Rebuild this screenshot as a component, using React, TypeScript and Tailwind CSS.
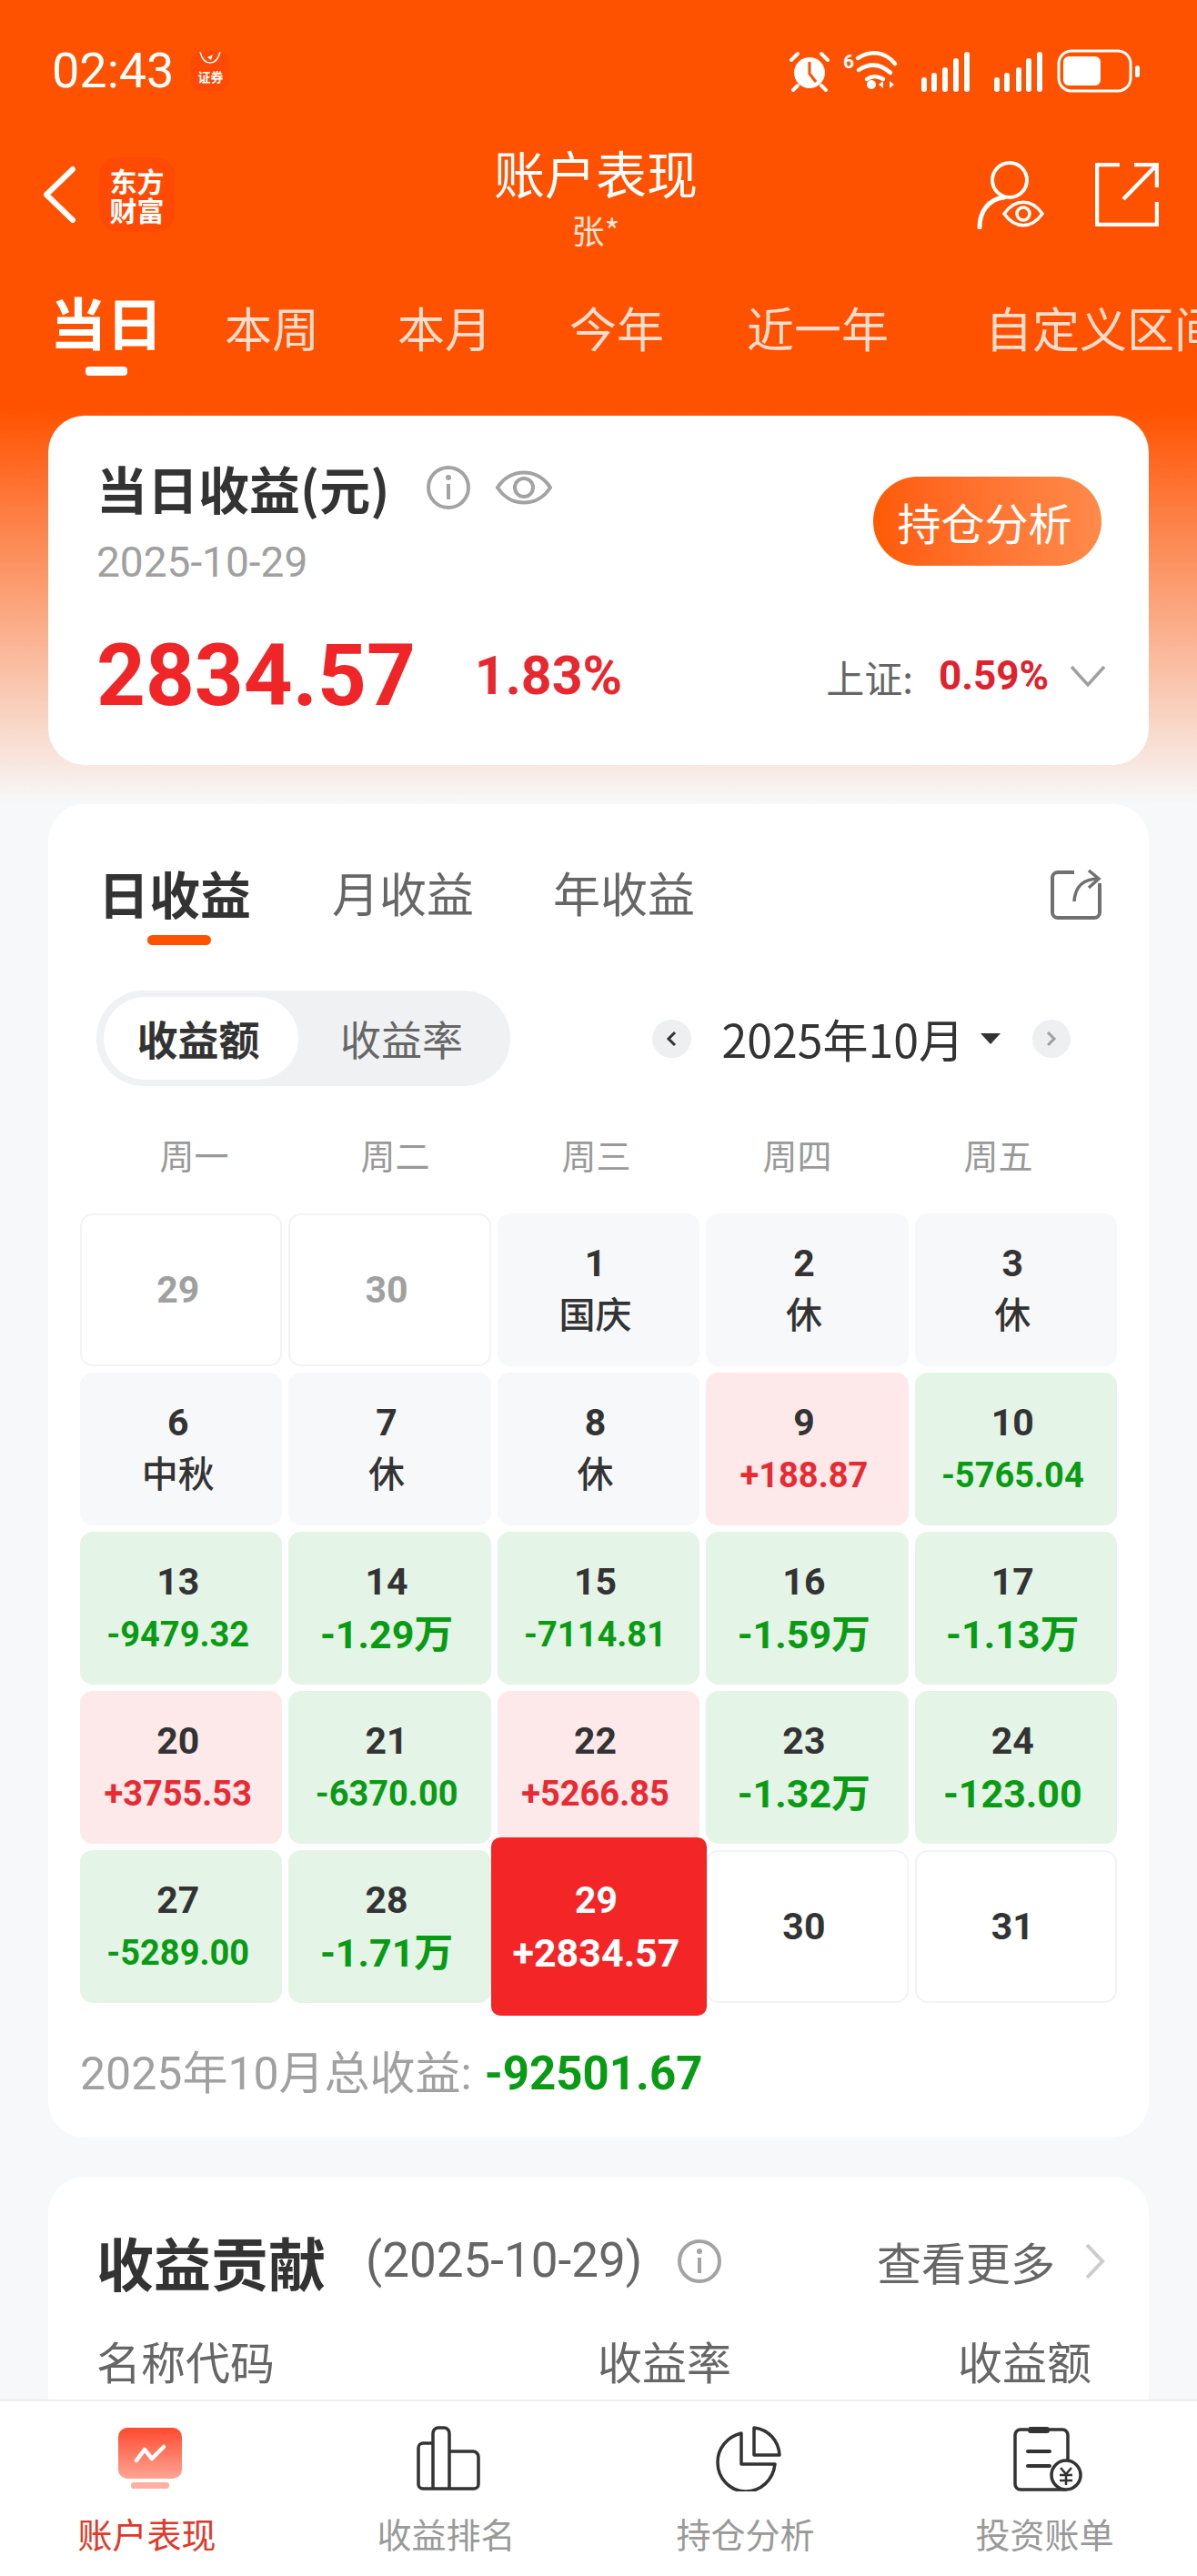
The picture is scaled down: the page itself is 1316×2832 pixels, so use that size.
type Day = { day: string; sub?: string; kind: 'out' | 'rest' | 'up' | 'down' | 'empty' | 'today'; big?: boolean };

// rows of the calendar, weekdays only
const days: Day[] = [
  { day: '29', kind: 'out' },
  { day: '30', kind: 'out' },
  { day: '1', sub: '国庆', kind: 'rest' },
  { day: '2', sub: '休', kind: 'rest' },
  { day: '3', sub: '休', kind: 'rest' },
  { day: '6', sub: '中秋', kind: 'rest' },
  { day: '7', sub: '休', kind: 'rest' },
  { day: '8', sub: '休', kind: 'rest' },
  { day: '9', sub: '+188.87', kind: 'up' },
  { day: '10', sub: '-5765.04', kind: 'down' },
  { day: '13', sub: '-9479.32', kind: 'down' },
  { day: '14', sub: '-1.29万', kind: 'down', big: true },
  { day: '15', sub: '-7114.81', kind: 'down' },
  { day: '16', sub: '-1.59万', kind: 'down', big: true },
  { day: '17', sub: '-1.13万', kind: 'down', big: true },
  { day: '20', sub: '+3755.53', kind: 'up' },
  { day: '21', sub: '-6370.00', kind: 'down' },
  { day: '22', sub: '+5266.85', kind: 'up' },
  { day: '23', sub: '-1.32万', kind: 'down', big: true },
  { day: '24', sub: '-123.00', kind: 'down', big: true },
  { day: '27', sub: '-5289.00', kind: 'down' },
  { day: '28', sub: '-1.71万', kind: 'down', big: true },
  { day: '29', sub: '+2834.57', kind: 'today' },
  { day: '30', kind: 'empty' },
  { day: '31', kind: 'empty' },
];

const DIGITS = "font-['Roboto','Noto_Sans_CJK_SC',sans-serif]";

function DayCell({ d }: { d: Day }) {
  if (d.kind === 'today') {
    return (
      <div className="relative h-[168px]">
        <div className={`absolute -top-[14px] -left-[7px] -right-[8px] h-[196px] pr-[6px] rounded-[10px] bg-[#f32526] flex flex-col items-center justify-center text-white font-bold z-10 ${DIGITS}`}>
          <div className="text-[41px] leading-[58px]">{d.day}</div>
          <div className="text-[43px] leading-[58px]">{d.sub}</div>
        </div>
      </div>
    );
  }
  let box = 'bg-[#f7f8fa]';
  let subColor = 'text-[#333333]';
  if (d.kind === 'out' || d.kind === 'empty') box = 'bg-white border-2 border-[#f3f3f5]';
  if (d.kind === 'up') {
    box = 'bg-[#fde9e9]';
    subColor = 'text-[#e82a33]';
  }
  if (d.kind === 'down') {
    box = 'bg-[#e4f4e6]';
    subColor = 'text-[#0a9b14]';
  }
  const isText = d.kind === 'rest';
  return (
    <div className={`h-[168px] pr-[7px] rounded-[14px] flex flex-col items-center justify-center font-bold ${DIGITS} ${box}`}>
      <div className={`text-[41px] leading-[58px] ${d.kind === 'out' ? 'text-[#a0a0a0]' : 'text-[#333333]'}`}>{d.day}</div>
      {d.sub && <div className={`${d.big ? 'text-[43px]' : isText ? 'text-[40px] font-medium' : 'text-[38px]'} leading-[58px] ${subColor}`}>{d.sub}</div>}
    </div>
  );
}

function InfoIcon({ color = '#a3a3a3' }: { color?: string }) {
  return (
    <svg width="50" height="50" viewBox="0 0 50 50" fill="none">
      <circle cx="25" cy="25" r="22" stroke={color} strokeWidth="4" />
      <circle cx="25" cy="14" r="3" fill={color} />
      <rect x="23" y="21" width="4" height="17" fill={color} />
    </svg>
  );
}

function StatusBar() {
  return (
    <div className="h-[157px] pl-[57px] pr-[56px] pt-[50px] flex justify-between items-start text-white">
      <div className="flex items-start">
        <span className="text-[54px] leading-[56px] font-['Roboto',sans-serif]">02:43</span>
        <div className="ml-[19px] mt-[7px] w-[42px] h-[43px] rounded-[10px] bg-[#ff4a04] flex flex-col items-center justify-between pb-[8px] text-[14px] leading-[16px] font-bold">
          <svg width="26" height="14" viewBox="0 0 26 14" fill="none">
            <path d="M2 0c2 8 6 12 11 12s9-4 11-12" stroke="white" strokeWidth="1.5" />
            <path d="M10 6l6-3-2 6z" fill="white" />
          </svg>
          证券
        </div>
      </div>
      <svg width="400" height="56" viewBox="0 0 400 56" fill="none">
        {/* alarm */}
        <circle cx="30" cy="30" r="17" fill="white" />
        <path d="M30 18v13l7 9" stroke="#ff5200" strokeWidth="3" />
        <path d="M10 16l7-7M50 16l-7-7M12 49l5-5M48 49l-5-5" stroke="white" strokeWidth="4" strokeLinecap="round" />
        {/* wifi */}
        <text x="67" y="25" fill="white" fontSize="21" fontWeight="700" fontFamily="Roboto, sans-serif">6</text>
        <path d="M83 14c14-9 29-8 41 6M84 27c12-8 24-7 35 3M93 37c6-4 11-4 18 0" stroke="white" strokeWidth="4.5" strokeLinecap="round" />
        <circle cx="98" cy="43" r="5" fill="white" />
        <path d="M106 43l5-4v8zM118 39l5 4-5 4z" fill="white" />
        {/* signal */}
        <path d="M156 38v10M167 33v15M179 27v21M191 17v31M203 10v38M236 38v10M247 33v15M260 27v21M271 17v31M283 10v38" stroke="white" strokeWidth="6" strokeLinecap="round" />
        {/* battery */}
        <rect x="304" y="6" width="79" height="44" rx="14" stroke="white" strokeWidth="3" />
        <rect x="309" y="12" width="41" height="32" rx="6" fill="white" />
        <rect x="388" y="22" width="5" height="13" rx="2.5" fill="white" />
      </svg>
    </div>
  );
}

function NavBar() {
  return (
    <div className="h-[114px] pl-[46px] pr-[42px] flex items-center justify-between text-white">
      <div className="flex items-center gap-[25px] w-[290px]">
        <svg width="38" height="64" viewBox="0 0 38 64" fill="none">
          <path d="M34 4L5 32l29 28" stroke="white" strokeWidth="6" strokeLinecap="round" strokeLinejoin="round" />
        </svg>
        <div className="w-[83px] h-[82px] rounded-[20px] bg-[#ff4a04] flex flex-col items-center justify-center text-[30px] leading-[32px] font-bold">
          <div>东方</div>
          <div>财富</div>
        </div>
      </div>
      <div className="flex flex-col items-center">
        <div className="text-[56px] leading-[70px]">账户表现</div>
        <div className="text-[36px] leading-[44px] mt-[6px] text-[#ffe6d8]">张*</div>
      </div>
      <div className="flex items-center gap-[56px] w-[300px] justify-end">
        <svg width="74" height="76" viewBox="0 0 74 76" fill="none">
          <circle cx="36" cy="22" r="19" stroke="white" strokeWidth="4" />
          <path d="M3 74c0-18 10-31 27-33" stroke="white" strokeWidth="5" strokeLinecap="round" />
          <path d="M30 59c12-17 30-17 42 0c-12 17-30 17-42 0z" stroke="white" strokeWidth="3.5" />
          <circle cx="51" cy="59" r="7" stroke="white" strokeWidth="3.5" />
        </svg>
        <svg width="70" height="70" viewBox="0 0 70 70" fill="none">
          <path d="M27 2H2v66h66V43" stroke="white" strokeWidth="4.5" strokeLinejoin="round" />
          <path d="M43 2h25v25M68 2L31 40" stroke="white" strokeWidth="4.5" />
        </svg>
      </div>
    </div>
  );
}

function PeriodTabs() {
  return (
    <div className="h-[186px] pl-[55px] flex items-start whitespace-nowrap overflow-hidden text-[52px] leading-[66px] text-[#ffdccb]">
      <div className="flex flex-col items-center mt-[44px]">
        <div className="font-bold text-white text-[62px] leading-[76px]">当日</div>
        <div className="w-[46px] h-[10px] rounded-[4px] bg-white mt-[12px]" />
      </div>
      <div className="ml-[68px] mt-[56px]">本周</div>
      <div className="ml-[86px] mt-[56px]">本月</div>
      <div className="ml-[85px] mt-[56px]">今年</div>
      <div className="ml-[91px] mt-[56px]">近一年</div>
      <div className="ml-[106px] mt-[56px]">自定义区间</div>
    </div>
  );
}

function SummaryCard() {
  return (
    <div className="h-[384px] mx-[53px] rounded-[40px] bg-white pl-[53px] pr-[47px] pt-[44px]">
      <div className="flex items-start justify-between">
        <div>
          <div className="flex items-center">
            <div className="text-[56px] leading-[70px] font-bold">当日收益(元)</div>
            <div className="ml-[40px]"><InfoIcon /></div>
            <svg width="62" height="48" viewBox="0 0 62 48" fill="none" className="ml-[27px]">
              <path d="M2 24C16 2 46 2 60 24C46 46 16 46 2 24z" stroke="#a3a3a3" strokeWidth="4" />
              <circle cx="31" cy="24" r="10" stroke="#a3a3a3" strokeWidth="4" />
            </svg>
          </div>
          <div className="text-[46px] leading-[54px] text-[#a0a0a0] mt-[20px] font-['Roboto',sans-serif]">2025-10-29</div>
        </div>
        <div className="w-[251px] h-[98px] mt-[23px] mr-[5px] rounded-[49px] bg-gradient-to-r from-[#ff5a00] to-[#ff8a4a] text-white text-[48px] flex items-center justify-center pr-[6px]">持仓分析</div>
      </div>
      <div className="flex items-center mt-[43px] font-bold font-['Roboto',sans-serif]">
        <div className="text-[94px] leading-[110px] text-[#f02527]">2834.57</div>
        <div className="text-[59px] text-[#e8282e] ml-[65px]">1.83%</div>
        <div className="ml-auto text-[42px] font-normal text-[#666666] font-['Noto_Sans_CJK_SC',sans-serif]">上证:</div>
        <div className="text-[44px] text-[#e0212e] ml-[28px]">0.59%</div>
        <svg width="40" height="26" viewBox="0 0 40 26" fill="none" className="ml-[23px]">
          <path d="M2 3l18 20L38 3" stroke="#a0a0a0" strokeWidth="3.5" />
        </svg>
      </div>
    </div>
  );
}

function CalendarCard() {
  return (
    <div className="h-[1466px] mx-[53px] mt-[43px] rounded-[40px] bg-white pt-[62px] px-[35px]">
      <div className="flex items-start h-[143px] pl-[20px] pr-[17px]">
        <div className="flex flex-col items-center">
          <div className="text-[56px] leading-[70px] font-bold">日收益</div>
          <div className="w-[70px] h-[11px] rounded-[6px] bg-[#ff5200] mt-[12px] ml-[10px]" />
        </div>
        <div className="text-[52px] leading-[70px] text-[#666666] ml-[89px]">月收益</div>
        <div className="text-[52px] leading-[70px] text-[#666666] ml-[87px]">年收益</div>
        <svg width="56" height="56" viewBox="0 0 56 56" fill="none" className="ml-auto mt-[9px]">
          <path d="M26 4H8a6 6 0 00-6 6v38a6 6 0 006 6h40a6 6 0 006-6V16" stroke="#707070" strokeWidth="4" />
          <path d="M42 2l11 9-11 10M53 11c-16 0-26 8-27 25" stroke="#707070" strokeWidth="3.5" />
        </svg>
      </div>

      <div className="flex items-center justify-between pl-[18px] pr-[51px]">
        <div className="w-[455px] h-[105px] rounded-[52px] bg-[#f0f1f3] pl-[8px] flex items-center text-[45px]">
          <div className="w-[214px] h-[91px] pr-[6px] rounded-[46px] bg-white flex items-center justify-center font-bold">收益额</div>
          <div className="flex-1 pr-[6px] text-center text-[#666666]">收益率</div>
        </div>
        <div className="flex items-center">
          <div className="w-[43px] h-[42px] rounded-full bg-[#eeeff1] flex items-center justify-center">
            <svg width="14" height="20" viewBox="0 0 14 20" fill="none"><path d="M11 3L4 10l7 7" stroke="#333333" strokeWidth="3" /></svg>
          </div>
          <div className="text-[50px] ml-[34px]">2025年10月</div>
          <svg width="22" height="12" viewBox="0 0 22 12" className="ml-[18px]"><path d="M0 0h22L11 12z" fill="#333333" /></svg>
          <div className="w-[42px] h-[42px] rounded-full bg-[#eeeff1] flex items-center justify-center ml-[35px]">
            <svg width="14" height="20" viewBox="0 0 14 20" fill="none"><path d="M3 3l7 7-7 7" stroke="#a0a0a0" strokeWidth="3" /></svg>
          </div>
        </div>
      </div>

      <div className="grid grid-cols-[repeat(5,221px)] pl-[15px] mt-[50px] text-[38px] leading-[50px] text-[#999999] text-center">
        <div>周一</div>
        <div>周二</div>
        <div>周三</div>
        <div>周四</div>
        <div>周五</div>
      </div>

      <div className="grid grid-cols-5 gap-x-[7px] gap-y-[7px] mt-[40px]">
        {days.map((d, i) => (
          <DayCell key={i} d={d} />
        ))}
      </div>

      <div className={`flex items-center text-[50px] leading-[60px] text-[#a0a0a0] mt-[48px] ${DIGITS}`}>
        2025年10月总收益:
        <span className="text-[51px] font-bold text-[#0a9b14] ml-[14px]">-92501.67</span>
      </div>
    </div>
  );
}

function ContributionCard() {
  return (
    <div className="h-[440px] mx-[53px] mt-[43px] rounded-[40px] bg-white pl-[53px] pr-[47px] pt-[53px]">
      <div className="flex items-center">
        <div className="text-[63px] leading-[80px] font-bold">收益贡献</div>
        <div className="text-[53px] text-[#666666] ml-[44px] font-['Roboto',sans-serif]">(2025-10-29)</div>
        <div className="ml-[38px]"><InfoIcon /></div>
        <div className="ml-auto text-[49px] text-[#666666]">查看更多</div>
        <svg width="24" height="40" viewBox="0 0 24 40" fill="none" className="ml-[32px]"><path d="M3 2l17 18L3 38" stroke="#cccccc" strokeWidth="4" /></svg>
      </div>
      <div className="flex text-[49px] leading-[66px] text-[#666666] mt-[36px] pr-[16px]">
        <div>名称代码</div>
        <div className="ml-[355px]">收益率</div>
        <div className="ml-auto">收益额</div>
      </div>
    </div>
  );
}

function TabBar() {
  return (
    <div className="absolute bottom-0 inset-x-0 h-[194px] pt-[27px] bg-white border-t-2 border-[#eeeeee] grid grid-cols-4 text-[38px] leading-[52px] text-[#999999]">
      <div className="flex flex-col items-center pr-[6px]">
        <svg width="72" height="72" viewBox="0 0 72 72" fill="none" className="ml-[6px]">
          <defs>
            <linearGradient id="tabRed" x1="0" y1="0" x2="0" y2="1">
              <stop offset="0" stopColor="#ff4a2e" />
              <stop offset="1" stopColor="#ffa594" />
            </linearGradient>
          </defs>
          <rect x="1" y="2" width="70" height="56" rx="10" fill="url(#tabRed)" />
          <rect x="15" y="62" width="42" height="7" rx="3" fill="#ffb0a2" />
          <path d="M21 38l9-12 8 10 13-13" stroke="white" strokeWidth="4.5" strokeLinecap="round" strokeLinejoin="round" />
        </svg>
        <div className="mt-[20px] text-[#e0392b]">账户表现</div>
      </div>
      <div className="flex flex-col items-center pr-[6px]">
        <svg width="74" height="72" viewBox="0 0 74 72" fill="none" className="ml-[6px]">
          <path d="M3 24a5 5 0 015-5h11v50H8a5 5 0 01-5-5zM19 8a6 6 0 016-6h6a6 6 0 016 6v61H19zM37 28h26a6 6 0 016 6v30a5 5 0 01-5 5H37z" stroke="#333333" strokeWidth="3.5" />
        </svg>
        <div className="mt-[20px]">收益排名</div>
      </div>
      <div className="flex flex-col items-center pr-[6px]">
        <svg width="72" height="72" viewBox="0 0 72 72" fill="none" className="ml-[6px]">
          <path d="M28 8C12 12 2 25 2 40c0 18 14 32 31 32s30-13 32-30H28z" stroke="#333333" strokeWidth="3.5" strokeLinejoin="round" />
          <path d="M42 2c16 2 27 14 28 30H42z" stroke="#333333" strokeWidth="3.5" strokeLinejoin="round" />
        </svg>
        <div className="mt-[20px]">持仓分析</div>
      </div>
      <div className="flex flex-col items-center pr-[6px]">
        <svg width="78" height="72" viewBox="0 0 76 72" fill="none" className="ml-[6px]">
          <path d="M16 4H8a6 6 0 00-6 6v54a6 6 0 006 6h50" stroke="#333333" strokeWidth="3.5" />
          <path d="M38 4h16a6 6 0 016 6v28" stroke="#333333" strokeWidth="3.5" />
          <rect x="16" y="1" width="24" height="7" rx="3" fill="#333333" />
          <path d="M16 28h24M16 44h24" stroke="#333333" strokeWidth="4" strokeLinecap="round" />
          <circle cx="58" cy="54" r="16" fill="white" stroke="#333333" strokeWidth="3.5" />
          <path d="M52 46l6 7 6-7M51 54h14M51 60h14M58 53v12" stroke="#333333" strokeWidth="2.5" />
        </svg>
        <div className="mt-[20px]">投资账单</div>
      </div>
    </div>
  );
}

export default function App() {
  return (
    <div className="w-[1316px] h-[2832px] relative overflow-hidden bg-[linear-gradient(#ff5200_450px,#f7f8fa_884px)] text-[#333333] font-['Noto_Sans_CJK_SC','Noto_Sans',sans-serif]">
      <StatusBar />
      <NavBar />
      <PeriodTabs />
      <SummaryCard />
      <CalendarCard />
      <ContributionCard />
      <TabBar />
    </div>
  );
}
